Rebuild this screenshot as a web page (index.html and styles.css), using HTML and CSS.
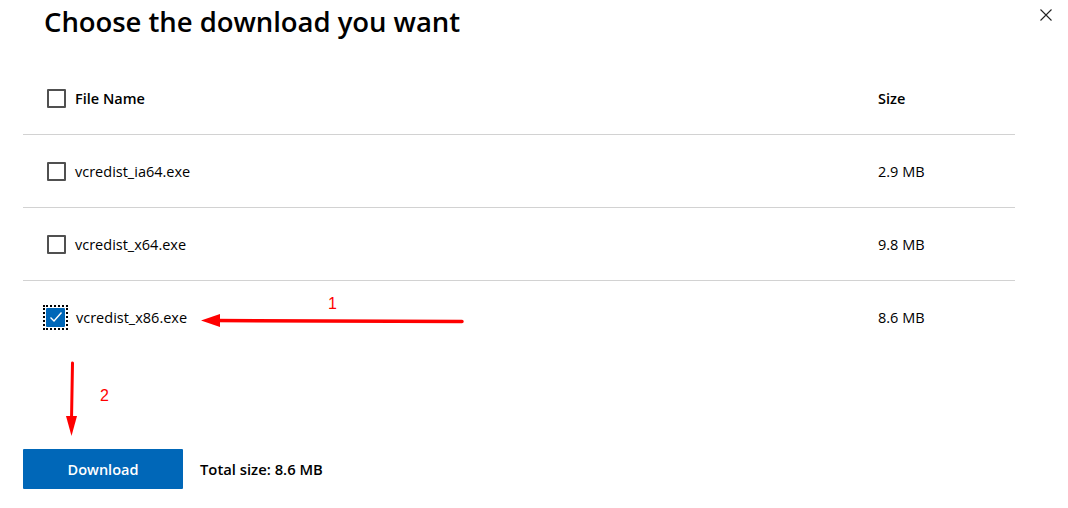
FILE: index.html
```html
<!DOCTYPE html>
<html>
<head>
<meta charset="utf-8">
<link rel="stylesheet" href="styles.css">
</head>
<body>
<div class="dialog">
  <button class="close" aria-label="Close">
    <svg width="12" height="12" viewBox="0 0 12 12"><path d="M0.5 0.5L11.5 11.5M11.5 0.5L0.5 11.5" stroke="#222" stroke-width="1.1"/></svg>
  </button>
  <h1 class="title">Choose the download you want</h1>
  <div class="table">
    <div class="row head">
      <label class="name"><span class="box"></span><span>File Name</span></label>
      <div class="size">Size</div>
    </div>
    <div class="row">
      <label class="name"><span class="box"></span><span>vcredist_ia64.exe</span></label>
      <div class="size">2.9 MB</div>
    </div>
    <div class="row">
      <label class="name"><span class="box"></span><span>vcredist_x64.exe</span></label>
      <div class="size">9.8 MB</div>
    </div>
    <div class="row last">
      <label class="name"><span class="focus"><span class="box checked"><svg width="14" height="12" viewBox="0 0 14 12"><path d="M1.5 6.5L5 10L12.5 1.5" fill="none" stroke="#fff" stroke-width="1.4"/></svg></span></span><span>vcredist_x86.exe</span></label>
      <div class="size">8.6 MB</div>
    </div>
  </div>
  <div class="footer">
    <button class="download">Download</button>
    <span class="total">Total size: 8.6 MB</span>
  </div>
  <svg class="annot" width="1068" height="508" viewBox="0 0 1068 508">
    <path d="M462 321.5 L215 320.5" stroke="#ff0000" stroke-width="3.5" stroke-linecap="round"/>
    <path d="M201 320.5 L220 314 L220 327 Z" fill="#ff0000"/>
    <text x="328" y="309" fill="#ff0000" font-family="Liberation Sans, sans-serif" font-size="16">1</text>
    <path d="M72.5 363 L71.5 420" stroke="#ff0000" stroke-width="3" stroke-linecap="round"/>
    <path d="M71.5 436 L66 416 L77 416 Z" fill="#ff0000"/>
    <text x="100" y="401" fill="#ff0000" font-family="Liberation Sans, sans-serif" font-size="16">2</text>
  </svg>
</div>
</body>
</html>
```
FILE: styles.css
```css
html, body {
  margin: 0;
  padding: 0;
  background: #fff;
}
body {
  font-family: "Open Sans", "Noto Sans", sans-serif;
  color: #000;
  width: 1068px;
  height: 508px;
  overflow: hidden;
}
.dialog {
  position: relative;
  width: 1068px;
  height: 508px;
  padding: 0 0 0 23px;
  box-sizing: border-box;
}
.close {
  position: absolute;
  right: 15px;
  top: 8px;
  border: 0;
  background: none;
  padding: 0;
  width: 14px;
  height: 14px;
  display: flex;
  align-items: center;
  justify-content: center;
}
.title {
  margin: 0;
  padding: 2px 0 0 21px;
  font-size: 27.5px;
  font-weight: 600;
  line-height: 40px;
  letter-spacing: -0.05px;
}
.table {
  width: 992px;
  margin-top: 26px;
}
.row {
  display: flex;
  align-items: center;
  height: 72px;
  border-bottom: 1px solid #d2d2d2;
  font-size: 14.5px;
}
.row.head {
  height: 67px;
  padding-bottom: 6px;
  box-sizing: border-box;
  font-weight: 600;
}
.row.last {
  border-bottom: 0;
}
.name {
  display: flex;
  align-items: center;
  gap: 9px;
  width: 855px;
  padding-left: 24px;
  box-sizing: border-box;
}
.size {
  flex: 1;
}
.box {
  width: 15px;
  height: 15px;
  border: 2px solid #505050;
  border-radius: 1px;
  display: inline-flex;
  align-items: center;
  justify-content: center;
  box-sizing: content-box;
}
.focus {
  display: inline-flex;
  margin: -4px -1px -4px -4px;
  padding: 1px;
  border: 2px dotted #000;
}
.box.checked {
  background: #0067b8;
  border-color: #0067b8;
}
.footer {
  display: flex;
  align-items: center;
  margin-top: 96px;
  gap: 17px;
}
.download {
  width: 160px;
  height: 40px;
  border: 0;
  border-radius: 1px;
  background: #0067b8;
  color: #fff;
  font-family: "Open Sans", "Noto Sans", sans-serif;
  font-size: 14.5px;
  font-weight: 600;
}
.total {
  font-size: 14.8px;
  font-weight: 600;
}
.annot {
  position: absolute;
  left: 0;
  top: 0;
  pointer-events: none;
}
```
